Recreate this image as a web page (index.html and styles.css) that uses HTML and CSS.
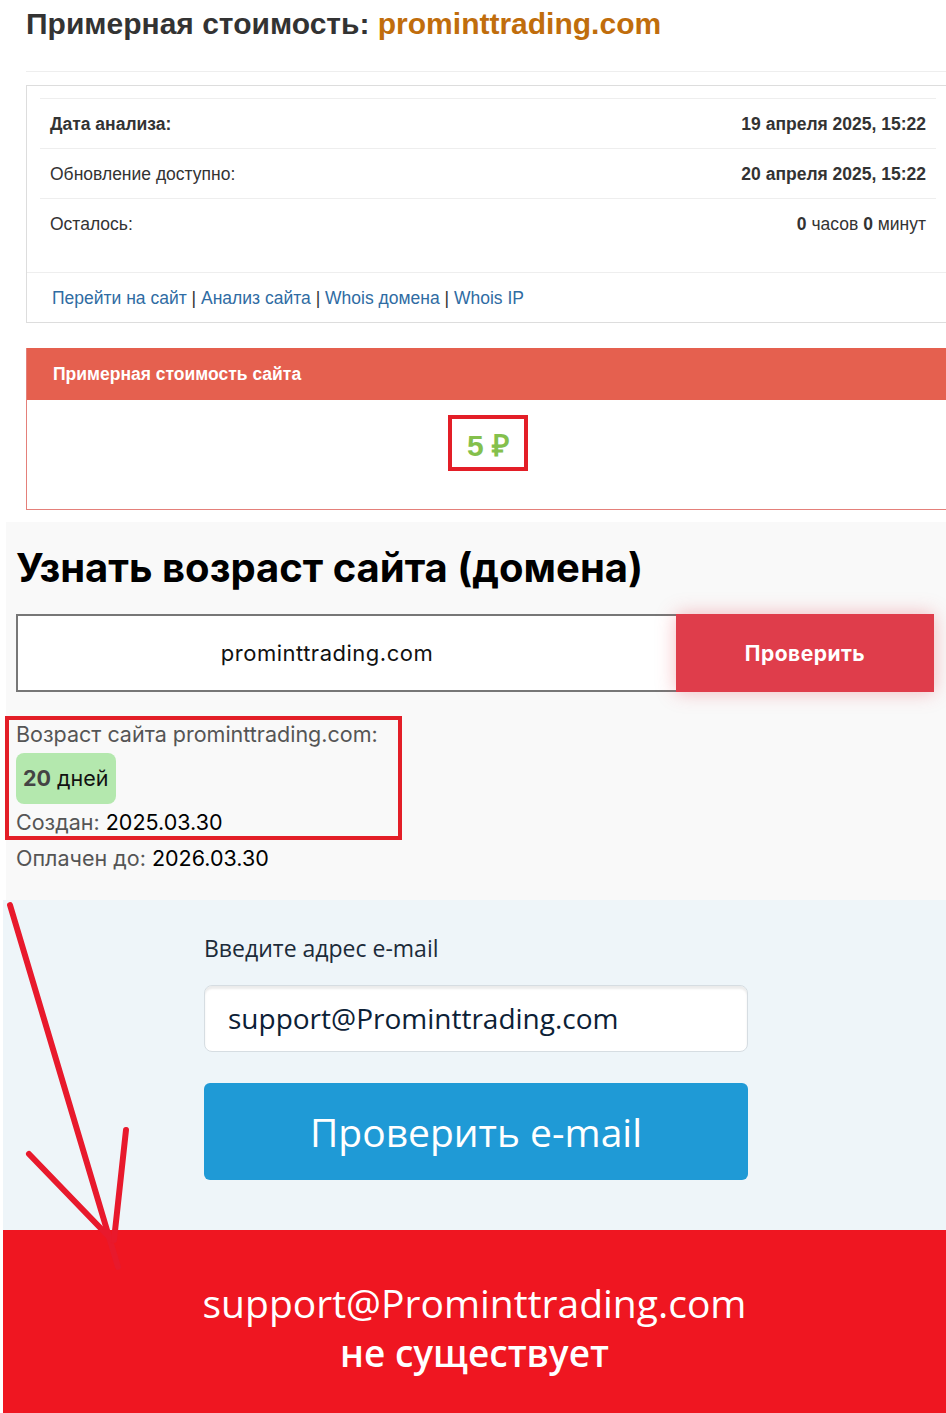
FILE: index.html
```html
<!DOCTYPE html>
<html lang="ru">
<head>
    <meta charset="UTF-8">
    <meta name="viewport" content="width=device-width, initial-scale=1.0">
    <title>Примерная стоимость: prominttrading.com</title>
    <link rel="stylesheet" href="styles.css">
</head>
<body>
    <div class="page">
        <section class="estimate">
            <h1 class="estimate-title">Примерная стоимость: <span class="domain">prominttrading.com</span></h1>
            <hr class="divider">

            <div class="info-card">
                <table class="info-table">
                    <tr>
                        <th>Дата анализа:</th>
                        <td><b>19 апреля 2025, 15:22</b></td>
                    </tr>
                    <tr>
                        <td>Обновление доступно:</td>
                        <td><b>20 апреля 2025, 15:22</b></td>
                    </tr>
                    <tr>
                        <td>Осталось:</td>
                        <td><b>0</b> часов <b>0</b> минут</td>
                    </tr>
                </table>
                <div class="info-links">
                    <a href="#">Перейти на сайт</a> | <a href="#">Анализ сайта</a> | <a href="#">Whois домена</a> | <a href="#">Whois IP</a>
                </div>
            </div>

            <div class="price-panel">
                <div class="price-head">Примерная стоимость сайта</div>
                <div class="price-body">
                    <span class="price-value">5 ₽</span>
                </div>
            </div>
        </section>

        <section class="age">
            <h2 class="age-title">Узнать возраст сайта (домена)</h2>
            <form class="age-form">
                <input class="age-input" type="text" value="prominttrading.com">
                <button class="age-button" type="button">Проверить</button>
            </form>
            <div class="age-result">
                <div class="age-line">Возраст сайта prominttrading.com:</div>
                <div class="age-badge"><b>20</b> дней</div>
                <div class="age-line">Создан: <span class="age-date">2025.03.30</span></div>
            </div>
            <div class="age-line age-paid">Оплачен до: <span class="age-date">2026.03.30</span></div>
        </section>

        <section class="email">
            <div class="email-form">
                <label class="email-label">Введите адрес e-mail</label>
                <div class="email-input">support@Prominttrading.com</div>
                <button class="email-button" type="button">Проверить e-mail</button>
            </div>
        </section>

        <div class="verdict">
            <div class="verdict-mail">support@Prominttrading.com</div>
            <div class="verdict-text">не существует</div>
        </div>

        <!-- hand drawn arrow over the screenshot -->
        <svg class="arrow" width="140" height="380" viewBox="0 0 140 380">
            <path d="M10 10 L118 372" />
            <path d="M29 259 L112 345" />
            <path d="M126 235 L114 345" />
        </svg>
    </div>
</body>
</html>
```

FILE: styles.css
```css
:root {
    --text-dark: #333;
    --line: #e6e6e6;
    --coral: #e5604f;
    --mark-red: #e31e27;
}

body {
    margin: 0;
    background: #fff;
    overflow-x: hidden;
}

.page {
    position: relative;
    width: 946px;
}

/* --- site estimate block --- */

.estimate {
    padding: 0 0 12px 26px;
    font-family: 'Liberation Sans', Arial, sans-serif;
    color: var(--text-dark);
}

.estimate-title {
    margin: 0;
    padding-top: 7px;
    font-size: 30px;
    line-height: 34px;
    font-weight: bold;
    color: #333;
}

.estimate-title .domain {
    color: #c06d0c;
}

.divider {
    margin: 30px 0 13px;
    border: 0;
    border-top: 1px solid #eee;
}

.info-card {
    margin-right: -3px;
    border: 1px solid #ddd;
    border-right: 0;
}

.info-table {
    width: calc(100% - 26px);
    margin: 12px 13px 24px;
    border-collapse: collapse;
    font-size: 17.5px;
}

.info-table th,
.info-table td {
    padding: 15px 10px 14px;
    line-height: 20px;
    border-top: 1px solid #eee;
    text-align: left;
    font-weight: normal;
}

.info-table th {
    font-weight: bold;
}

.info-table td:last-child {
    text-align: right;
}

.info-links {
    border-top: 1px solid #eee;
    padding: 15px 25px 14px;
    font-size: 17.5px;
    line-height: 20px;
}

.info-links a {
    color: #2f6ca3;
    text-decoration: none;
}

.price-panel {
    margin: 25px -3px 0 0;
    border: 1px solid #e4807a;
    border-top: 0;
    border-right: 0;
}

.price-head {
    background: var(--coral);
    color: #fff;
    font-weight: bold;
    font-size: 17.5px;
    height: 52px;
    line-height: 52px;
    padding-left: 26px;
}

.price-body {
    text-align: center;
    padding: 15px 0 38px;
}

.price-value {
    display: inline-block;
    padding: 11px 15px 5px;
    border: 4px solid var(--mark-red);
    font-size: 30px;
    line-height: 32px;
    font-weight: bold;
    color: #84c04c;
}

/* --- domain age block --- */

.age {
    margin-left: 6px;
    padding: 23px 12px 28px 10px;
    background: #f9f9f9;
    font-family: Inter, 'Open Sans', sans-serif;
    color: #555;
}

.age-title {
    margin: 0;
    font-size: 40px;
    line-height: 46px;
    font-weight: bold;
    color: #000;
}

.age-form {
    display: flex;
    margin: 23px 0 24px;
    height: 78px;
}

.age-input {
    flex: 1;
    box-sizing: border-box;
    height: 78px;
    border: 2px solid #777;
    border-right: 0;
    padding: 0 40px 0 0;
    text-align: center;
    font-family: Inter, sans-serif;
    font-size: 22px;
    letter-spacing: 0.5px;
    color: #111;
    background: #fff;
}

.age-button {
    width: 258px;
    border: 0;
    background: #df3d4b;
    color: #fff;
    font-family: Inter, sans-serif;
    font-size: 21px;
    letter-spacing: 0.5px;
    font-weight: bold;
    box-shadow: 0 0 18px rgba(230, 60, 75, 0.35);
}

.age-result {
    width: fit-content;
    margin-left: -11px;
    padding: 0 20px 0 7px;
    border: 4px solid var(--mark-red);
}

.age-line {
    font-size: 21.5px;
    line-height: 28px;
    color: #555;
}

.age-date {
    color: #000;
}

.age-badge {
    display: inline-block;
    margin: 5px 0 4px;
    padding: 0 7px;
    height: 51px;
    line-height: 51px;
    border-radius: 8px;
    background: #b4e8ae;
    font-size: 21.5px;
    color: #111;
}

.age-badge b {
    color: #444;
}

.age-paid {
    margin-top: 4px;
}

/* --- e-mail check block --- */

.email {
    margin-left: 3px;
    padding: 36px 0 50px;
    background: #eef5f9;
    font-family: 'Open Sans', sans-serif;
}

.email-form {
    width: 544px;
    margin-left: 201px;
}

.email-label {
    display: block;
    font-size: 23px;
    line-height: 24px;
    color: #1c2b39;
}

.email-input {
    box-sizing: border-box;
    margin-top: 25px;
    height: 67px;
    line-height: 65px;
    padding-left: 23px;
    border: 1px solid #d6dde2;
    border-radius: 8px;
    background: #fff;
    box-shadow: inset 0 3px 2px rgba(0, 0, 0, 0.08);
    font-size: 28px;
    color: #0c2136;
}

.email-button {
    display: block;
    width: 100%;
    height: 97px;
    margin-top: 31px;
    border: 0;
    border-radius: 6px;
    background: #1f9ad6;
    color: #fff;
    font-family: 'Open Sans', sans-serif;
    font-size: 39px;
}

.verdict {
    margin-left: 3px;
    padding: 48px 0 35px;
    background: #ef1621;
    color: #fff;
    text-align: center;
    font-family: 'Open Sans', sans-serif;
}

.verdict-mail {
    font-size: 39px;
    line-height: 50px;
}

.verdict-text {
    font-size: 37px;
    line-height: 50px;
    font-weight: 600;
}

/* annotation arrow lies over the sections */
.arrow {
    position: absolute;
    left: 0;
    top: 895px;
    pointer-events: none;
}

.arrow path {
    stroke: #e8192c;
    stroke-width: 6;
    stroke-linecap: round;
    fill: none;
}
```
